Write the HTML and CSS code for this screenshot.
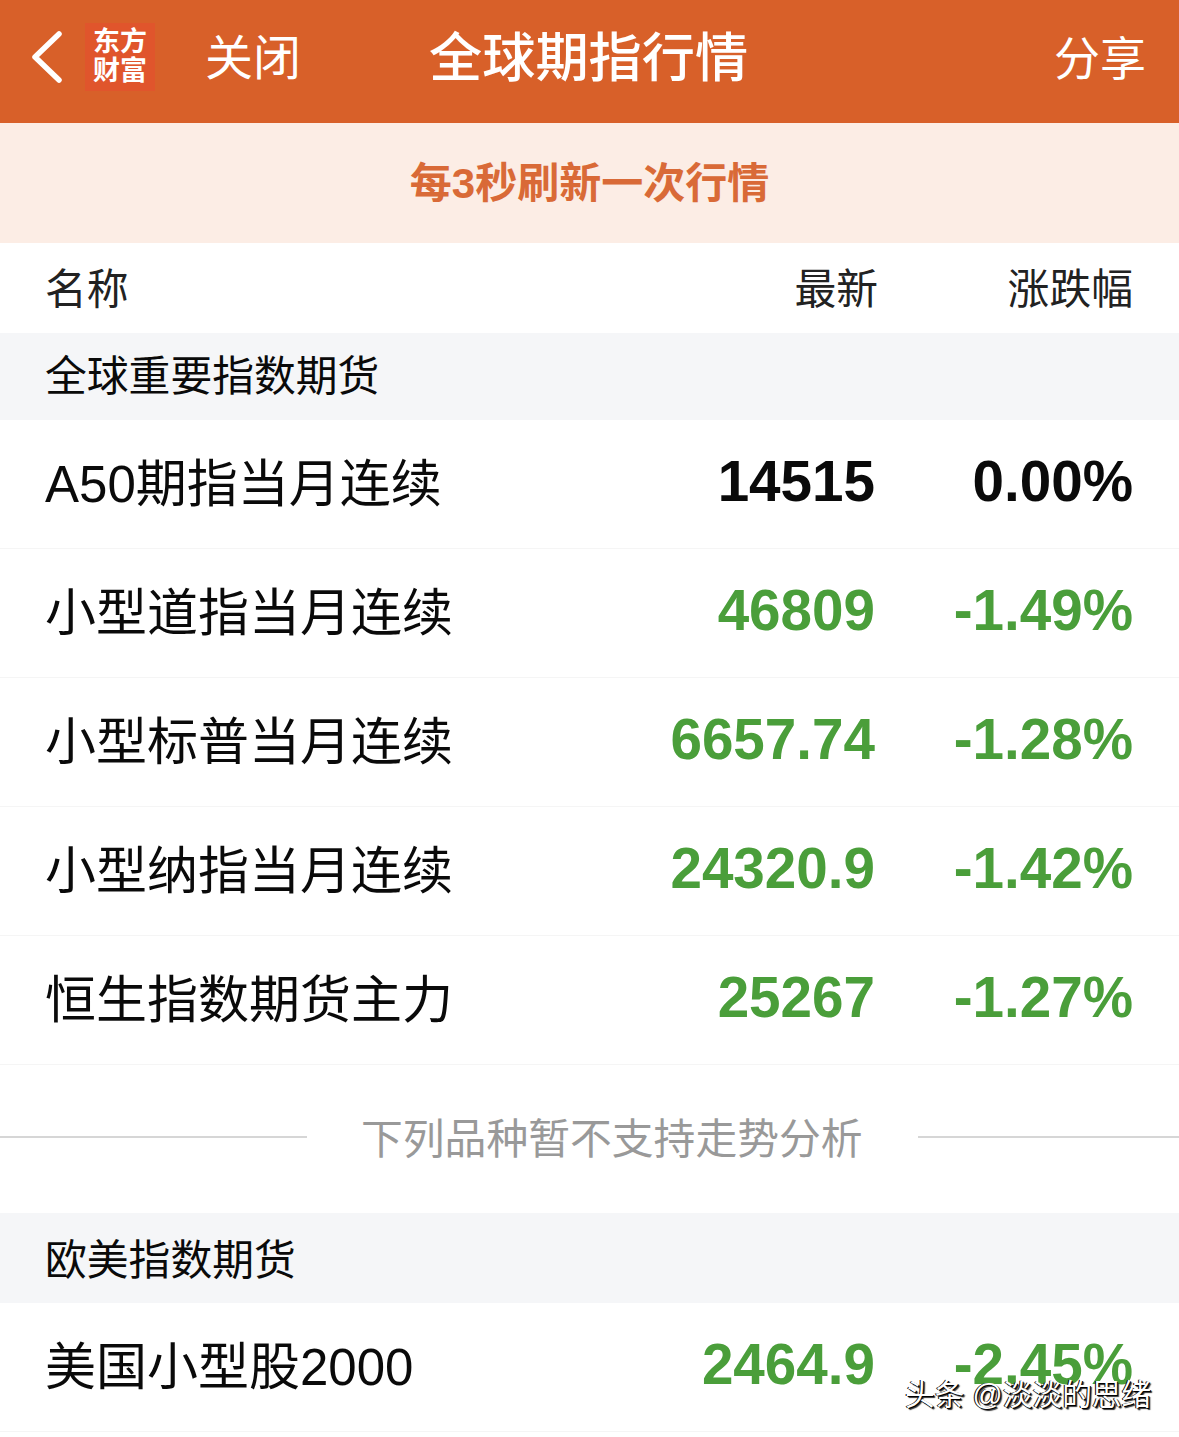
FILE: index.html
```html
<!DOCTYPE html>
<html lang="zh-CN">
<head>
<meta charset="UTF-8">
<meta name="viewport" content="width=device-width, initial-scale=1.0">
<title>全球期指行情</title>
<link rel="stylesheet" href="styles.css">
</head>
<body>
    <div class="topbar">
        <svg class="back" width="34" height="54" viewBox="0 0 34 54">
            <path d="M29 4 L5 27 L29 50" fill="none" stroke="#fff" stroke-width="5.5" stroke-linecap="round" stroke-linejoin="round"/>
        </svg>
        <div class="logo"><span>东方</span><span>财富</span></div>
        <a class="close">关闭</a>
        <div class="title">全球期指行情</div>
        <a class="share">分享</a>
    </div>
    <div class="notice">每3秒刷新一次行情</div>

    <div class="head">
        <div class="name">名称</div>
        <div class="latest">最新</div>
        <div class="change">涨跌幅</div>
    </div>

    <div class="section">全球重要指数期货</div>
    <div class="row">
        <div class="name">A50期指当月连续</div>
        <div class="latest">14515</div>
        <div class="change">0.00%</div>
    </div>
    <div class="row down">
        <div class="name">小型道指当月连续</div>
        <div class="latest">46809</div>
        <div class="change">-1.49%</div>
    </div>
    <div class="row down">
        <div class="name">小型标普当月连续</div>
        <div class="latest">6657.74</div>
        <div class="change">-1.28%</div>
    </div>
    <div class="row down">
        <div class="name">小型纳指当月连续</div>
        <div class="latest">24320.9</div>
        <div class="change">-1.42%</div>
    </div>
    <div class="row down">
        <div class="name">恒生指数期货主力</div>
        <div class="latest">25267</div>
        <div class="change">-1.27%</div>
    </div>

    <div class="divider">
        <span class="line line-left"></span>
        <span class="divider-text">下列品种暂不支持走势分析</span>
        <span class="line"></span>
    </div>

    <div class="section section-eu">欧美指数期货</div>
    <div class="row down">
        <div class="name">美国小型股2000</div>
        <div class="latest">2464.9</div>
        <div class="change">-2.45%</div>
    </div>

    <div class="watermark">头条 @淡淡的思绪</div>
</body>
</html>
```

FILE: styles.css
```css
html, body {
    margin: 0;
    padding: 0;
}
* {
    box-sizing: border-box;
}
body {
    position: relative;
    height: 1437px;
    overflow: hidden;
    background: #fff;
    color: #0a0a0a;
    font-family: "Liberation Sans", "Noto Sans CJK SC", sans-serif;
}

/* Barra superior */
.topbar {
    height: 123px;
    padding-bottom: 10px;
    background: #d86029;
    color: #fff;
    display: flex;
    align-items: center;
}
.back {
    margin-left: 30px;
    flex: none;
}
.logo {
    width: 70px;
    height: 68px;
    margin-left: 21px;
    background: #e0552c;
    display: flex;
    flex-direction: column;
    align-items: center;
    justify-content: center;
    font-size: 27px;
    font-weight: 700;
    line-height: 29px;
    flex: none;
}
.close {
    margin-left: 50px;
    margin-bottom: 6px;
    width: 224px;
    font-size: 48px;
    flex: none;
}
.title {
    width: 320px;
    margin-bottom: 6px;
    font-size: 53.2px;
    font-weight: 500;
    white-space: nowrap;
    flex: none;
}
.share {
    margin-left: auto;
    margin-right: 33px;
    margin-bottom: 4px;
    font-size: 46px;
}

.notice {
    height: 120px;
    padding-bottom: 8px;
    background: #fcede5;
    color: #d96a37;
    font-size: 42px;
    font-weight: 700;
    display: flex;
    align-items: center;
    justify-content: center;
}

/* Linhas da tabela */
.head,
.row {
    display: flex;
    align-items: center;
    padding: 0 46px 8px 45px;
}
.head {
    height: 90px;
    padding-bottom: 4px;
    font-size: 41.8px;
    color: #222;
}
.head .latest {
    margin-left: 3px;
    margin-right: -3px;
}
.row {
    height: 129px;
    border-bottom: 1px solid #f5f5f5;
    font-size: 51px;
}
.name {
    flex: 1;
    white-space: nowrap;
}
.latest {
    width: 300px;
    text-align: right;
    white-space: nowrap;
}
.change {
    width: 258px;
    text-align: right;
    white-space: nowrap;
}
.row .latest {
    margin-right: 1px;
}
.row .change {
    width: 257px;
}
.row .latest,
.row .change {
    margin-top: 2px;
    font-size: 56.6px;
    font-weight: 700;
}
.down .latest,
.down .change {
    color: #4a9e3a;
}

.section {
    height: 87px;
    padding: 0 0 8px 45px;
    background: #f5f6f8;
    font-size: 41.8px;
    display: flex;
    align-items: center;
}
.section-eu {
    height: 90px;
    padding-bottom: 3px;
}

/* Separador */
.divider {
    height: 148px;
    padding-bottom: 4px;
    display: flex;
    align-items: center;
}
.line {
    flex: 1;
    height: 2px;
    background: #d6d6d6;
}
.line-left {
    flex: none;
    width: 307px;
}
.divider-text {
    margin: 0 55px 2px 54px;
    font-size: 41.8px;
    color: #999;
    white-space: nowrap;
}

/* Marca d'agua por cima do conteudo */
.watermark {
    position: absolute;
    left: 905px;
    top: 1376px;
    font-size: 29.7px;
    line-height: 38px;
    color: #fff;
    white-space: nowrap;
    text-shadow: 1px 1px 0 #000, -1px 0 0 #000, 2px 2px 1px #333;
}
```
